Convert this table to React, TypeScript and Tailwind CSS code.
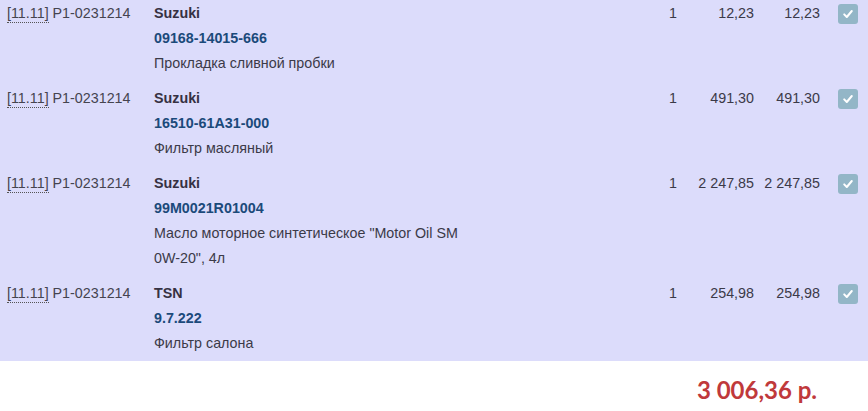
const items = [
  { brand: "Suzuki", code: "09168-14015-666", desc: "Прокладка сливной пробки", qty: 1, price: "12,23", sum: "12,23" },
  { brand: "Suzuki", code: "16510-61A31-000", desc: "Фильтр масляный", qty: 1, price: "491,30", sum: "491,30" },
  { brand: "Suzuki", code: "99M0021R01004", desc: "Масло моторное синтетическое \"Motor Oil SM 0W-20\", 4л", qty: 1, price: "2 247,85", sum: "2 247,85" },
  { brand: "TSN", code: "9.7.222", desc: "Фильтр салона", qty: 1, price: "254,98", sum: "254,98" },
];

function Check() {
  return (
    <div className="w-5 h-5 mt-[3px] rounded-[3px] bg-[#93b6c7] flex items-center justify-center">
      <svg width="12" height="12" viewBox="0 0 12 12" fill="none">
        <path d="M2.2 6.4 L4.8 9 L9.8 3" stroke="white" strokeWidth="2" strokeLinecap="round" strokeLinejoin="round" />
      </svg>
    </div>
  );
}

export default function App() {
  return (
    <div className="w-[868px] h-[411px] bg-white overflow-hidden font-['Liberation_Sans',Arial,sans-serif] text-[14.3px] leading-[25px] text-[#3b3a48]">
      <div className="bg-[#dcdcfb] -mt-[4px]">
        {items.map((it, i) => (
          <div key={i} className="flex py-[5px]">
            <div className="w-[154px] pl-[7px] shrink-0 text-[#45444f]">
              <span className="border-b border-dotted border-[#555] leading-[18px] inline-block">[11.11]</span> P1-0231214
            </div>
            <div className="w-[318px] shrink-0">
              <div className="font-bold text-[#363142]">{it.brand}</div>
              <div className="font-bold text-[#1b4a7a]">{it.code}</div>
              <div>{it.desc}</div>
            </div>
            <div className="flex-1" />
            <div className="w-[20px] shrink-0">{it.qty}</div>
            <div className="w-[65px] shrink-0 text-right">{it.price}</div>
            <div className="w-[66px] shrink-0 text-right">{it.sum}</div>
            <div className="ml-[18px] mr-[10px] shrink-0">
              <Check />
            </div>
          </div>
        ))}
      </div>
      <div className="flex justify-end pr-[51px] pt-[14px]">
        <span className="font-['Lato',sans-serif] font-bold text-[24px] leading-[30px] text-[#c0393b]">3 006,36 р.</span>
      </div>
    </div>
  );
}
